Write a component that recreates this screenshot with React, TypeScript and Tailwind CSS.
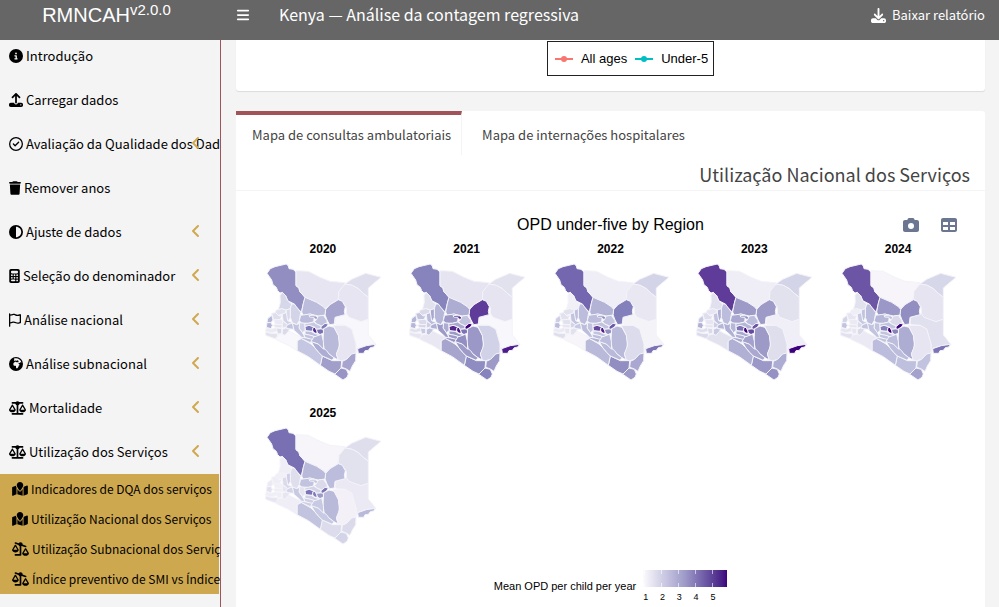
import type { IconType } from "react-icons";
import {
  FaAngleLeft,
  FaBars,
  FaCalculator,
  FaCamera,
  FaCircleHalfStroke,
  FaCircleInfo,
  FaDownload,
  FaEarthAfrica,
  FaMapLocation,
  FaRegCircleCheck,
  FaRegFlag,
  FaScaleBalanced,
  FaScaleUnbalancedFlip,
  FaTable,
  FaTrash,
  FaUpload,
} from "react-icons/fa6";

const MENU: { label: string; icon: IconType; size: string; expandable?: boolean }[] = [
  { label: "Introdução", icon: FaCircleInfo, size: "w-[14px]" },
  { label: "Carregar dados", icon: FaUpload, size: "w-[14px]" },
  { label: "Avaliação da Qualidade dos Dados", icon: FaRegCircleCheck, size: "w-[14px]", expandable: true },
  { label: "Remover anos", icon: FaTrash, size: "w-[12px]" },
  { label: "Ajuste de dados", icon: FaCircleHalfStroke, size: "w-[14px]", expandable: true },
  { label: "Seleção do denominador", icon: FaCalculator, size: "w-[11px]", expandable: true },
  { label: "Análise nacional", icon: FaRegFlag, size: "w-[12px]", expandable: true },
  { label: "Análise subnacional", icon: FaEarthAfrica, size: "w-[14px]", expandable: true },
  { label: "Mortalidade", icon: FaScaleBalanced, size: "w-[17px]", expandable: true },
  { label: "Utilização dos Serviços", icon: FaScaleBalanced, size: "w-[17px]", expandable: true },
];

const SUBMENU: { label: string; icon: IconType; size: string }[] = [
  { label: "Indicadores de DQA dos serviços", icon: FaMapLocation, size: "w-[16px]" },
  { label: "Utilização Nacional dos Serviços", icon: FaMapLocation, size: "w-[16px]" },
  { label: "Utilização Subnacional dos Serviços", icon: FaScaleUnbalancedFlip, size: "w-[17px]" },
  { label: "Índice preventivo de SMI vs Índice curativo", icon: FaScaleUnbalancedFlip, size: "w-[17px]" },
];

const YEARS = [2020, 2021, 2022, 2023, 2024, 2025];

// One shade per year (0 = lightest, 8 = darkest) for each county outline.
const COUNTIES: { name: string; points: string; shades: number[] }[] = [
  { name: "Turkana", shades: [4.4, 4.8, 5.5, 6.5, 5.9, 5.3], points: "36,58 46,44 60,38 94,30 100,36 102,44 114,46 123,54 123,95 132,102 134,112 150,130 145,148 139,174 122,158 118,150 98,140 92,125 82,115 75,117 68,110 64,100 54,92 50,78" },
  { name: "Marsabit", shades: [1.4, 1.5, 1, 1, 0.4, 0.4], points: "123,50 160,52 195,70 225,82 270,86 268,96 252,112 250,136 225,152 210,164 205,158 185,145 150,130 134,112 132,102 123,95" },
  { name: "Mandera", shades: [1.8, 1.6, 2.2, 2.2, 2.1, 1.8], points: "290,76 332,58 378,70 360,85 340,102 340,130 325,118 310,104 292,94 270,90" },
  { name: "Wajir", shades: [1.4, 1.5, 1.3, 1.6, 1.5, 1.6], points: "270,90 292,94 310,104 325,118 340,130 340,196 318,203 300,198 282,190 274,180 274,160 262,142 250,136 252,112" },
  { name: "Garissa", shades: [0.3, 0.3, 0.6, 0.9, 1.7, 1.2], points: "274,178 282,190 318,203 340,196 340,243 350,255 362,271 334,275 308,283 303,298 303,270 290,225 270,214 245,212 240,208 242,190 270,182" },
  { name: "Isiolo", shades: [3.7, 6.5, 4.9, 4, 4.4, 3], points: "250,137 262,142 271,158 268,172 270,182 240,190 238,210 224,212 216,198 210,182 212,166 225,152" },
  { name: "Samburu", shades: [3, 3.5, 3.3, 4, 4.1, 3.1], points: "150,130 185,145 205,158 212,166 210,182 205,184 190,186 165,180 145,184 140,174 145,148" },
  { name: "West Pokot", shades: [2.1, 1.6, 0.8, 1.7, 1.6, 1], points: "82,115 92,125 98,140 110,150 106,164 94,168 80,164 70,168 76,145 75,125" },
  { name: "Baringo", shades: [2.2, 3.2, 3, 3, 3, 1.8], points: "110,150 118,150 137,175 133,200 125,212 112,206 106,190 106,164" },
  { name: "Laikipia", shades: [3, 4, 3, 3.6, 3.2, 2.8], points: "137,184 165,180 178,184 176,204 160,208 140,208 133,200" },
  { name: "Isiolo South", shades: [4, 7, 4.6, 4.5, 3, 2.8], points: "162,184 182,186 190,192 184,198 176,190 164,189" },
  { name: "Meru", shades: [2.8, 2.8, 2.8, 3, 2, 2], points: "190,186 205,184 216,200 216,208 200,216 185,210 178,202 184,198" },
  { name: "Nyandarua", shades: [2.3, 3.5, 2.8, 3.2, 2.8, 1.5], points: "134,206 150,208 150,230 142,236 132,222" },
  { name: "Laikipia South", shades: [2.6, 3.6, 2.8, 3.2, 2.8, 2.2], points: "150,208 160,208 176,204 185,210 198,216 198,224 184,226 180,220 174,218 162,214 150,218" },
  { name: "Nyeri", shades: [5, 7, 6.2, 5.2, 4.9, 5.2], points: "150,218 162,214 174,218 178,228 168,232 152,230" },
  { name: "Kirinyaga", shades: [6.9, 7.4, 7.2, 8, 8, 5], points: "173,222 180,220 188,236 180,238 173,231" },
  { name: "Embu", shades: [5.3, 5.2, 4.4, 6.2, 4.8, 4], points: "184,226 204,224 206,236 196,242 188,238" },
  { name: "Tharaka", shades: [5, 8, 5.8, 5.9, 7.8, 5.2], points: "198,218 210,208 220,210 214,220 204,226 198,224" },
  { name: "Kitui", shades: [3.1, 4.1, 3.1, 4, 3.5, 3.1], points: "206,224 222,216 237,220 250,244 253,264 252,284 244,300 250,318 235,310 222,300 208,288 204,262" },
  { name: "Tana River", shades: [1.4, 2.3, 1.9, 1.8, 1.4, 0.7], points: "235,214 270,214 290,225 303,270 303,298 290,300 275,316 260,320 250,318 244,300 254,274 250,244" },
  { name: "Lamu", shades: [5.3, 7.3, 5.2, 8, 5.2, 3.1], points: "308,284 334,275 362,271 356,279 346,281 340,289 330,290 326,298 310,298" },
  { name: "Kilifi", shades: [3.7, 4, 3.6, 3.5, 2.8, 2], points: "303,297 302,320 292,336 285,352 272,344 260,340 262,322 275,316 290,300" },
  { name: "Kwale", shades: [4.2, 4.8, 4, 4.3, 3.8, 2.2], points: "238,360 258,342 274,346 280,360 276,370 264,378" },
  { name: "Taita Taveta", shades: [3.9, 4.5, 4.4, 4.1, 2.9, 1.9], points: "202,306 232,320 260,320 258,342 240,360 222,352 196,334" },
  { name: "Kajiado", shades: [2.7, 3.7, 3.1, 3.4, 3, 2.8], points: "126,258 140,254 168,270 180,282 192,296 202,306 196,334 160,308 126,290" },
  { name: "Narok", shades: [0.3, 1.3, 0.4, 1.6, 1.2, 1], points: "62,244 84,240 100,230 114,238 140,250 126,262 126,290 100,274 62,256" },
  { name: "Makueni", shades: [3.5, 4, 3.1, 3.6, 3, 2.6], points: "168,262 190,270 202,280 215,290 222,300 238,312 230,318 202,306 192,296 180,282" },
  { name: "Machakos", shades: [3.2, 4.4, 3, 3.8, 3, 2.6], points: "178,246 200,240 205,262 206,286 190,270 166,262" },
  { name: "Murang'a", shades: [3, 4, 2.8, 3.6, 2.8, 2.4], points: "150,231 168,232 180,239 196,242 180,248 150,240" },
  { name: "Kiambu", shades: [2.8, 4, 3, 3.4, 2.8, 2.4], points: "146,240 168,244 178,248 170,258 150,250" },
  { name: "Nairobi", shades: [3, 4.2, 3.4, 3.6, 2.8, 2.4], points: "140,250 154,252 172,256 166,266 140,254" },
  { name: "Nakuru", shades: [2.8, 4, 3, 3.4, 2.8, 2.6], points: "112,207 125,212 134,208 132,222 142,236 150,250 140,250 128,238 118,230 114,218" },
  { name: "Elgeyo Marakwet", shades: [2, 3.6, 2.9, 3.4, 2.8, 2.4], points: "94,168 106,164 106,190 100,202 94,190" },
  { name: "Trans Nzoia", shades: [1.6, 2, 1.6, 1.4, 1, 0.8], points: "64,168 80,164 94,168 90,178 70,184 60,176" },
  { name: "Uasin Gishu", shades: [2.2, 3, 2.8, 2.8, 2.6, 2], points: "82,180 94,176 98,200 112,206 98,212 84,200" },
  { name: "Bungoma", shades: [1.8, 2.8, 1.6, 1.8, 1.4, 1], points: "50,178 62,176 72,186 80,184 76,196 56,198" },
  { name: "Busia", shades: [3.2, 3.2, 2.4, 2.6, 2.2, 1.2], points: "38,194 50,184 54,198 48,206 36,206" },
  { name: "Kakamega", shades: [1.2, 2, 1.6, 1.4, 1.2, 0.8], points: "56,198 76,196 84,200 82,212 62,212" },
  { name: "Siaya", shades: [3.3, 3.2, 3, 3.4, 2.8, 1.6], points: "36,206 48,206 52,214 48,224 34,220" },
  { name: "Kisumu", shades: [1.5, 2.2, 1.4, 1.4, 1.4, 1], points: "54,214 62,212 82,212 80,222 62,220" },
  { name: "Nandi", shades: [1.8, 2.4, 2.2, 2.4, 2, 1.4], points: "82,212 84,202 98,212 92,220 82,222" },
  { name: "Kericho", shades: [2.8, 3.4, 2.6, 3.2, 2.8, 2.2], points: "98,212 112,207 116,226 100,224 92,220" },
  { name: "Bomet", shades: [2, 2.8, 1.6, 2.6, 2, 1.4], points: "92,222 104,226 100,232 90,244 82,240 82,226" },
  { name: "Homa Bay", shades: [1.2, 1.6, 1.2, 1.8, 1.4, 1], points: "34,222 50,226 64,220 68,232 48,236 32,232" },
  { name: "Kisii", shades: [2, 2.6, 1.4, 2, 1.4, 1], points: "64,222 80,224 80,238 68,240" },
  { name: "Migori", shades: [1.6, 1.4, 1.8, 2, 1.6, 1.4], points: "32,234 48,238 66,238 68,246 60,254 32,244" },
];

const PURPLES = [
  [252, 251, 253],
  [239, 237, 245],
  [218, 218, 235],
  [188, 189, 220],
  [158, 154, 200],
  [128, 125, 186],
  [106, 81, 163],
  [84, 39, 143],
  [63, 0, 125],
];

function shadeToColor(shade: number) {
  const low = Math.floor(shade);
  const high = Math.min(low + 1, PURPLES.length - 1);
  const t = shade - low;
  const [r, g, b] = PURPLES[low].map((c, i) => Math.round(c + (PURPLES[high][i] - c) * t));
  return `rgb(${r}, ${g}, ${b})`;
}

function CountyMap({ index }: { index: number }) {
  return (
    <svg viewBox="0 0 420 405" className="ml-1 h-[135px] w-[140px]" role="img" aria-label={`OPD ${YEARS[index]}`}>
      <g stroke="#f3f3f9" strokeWidth="3" strokeLinejoin="round">
        {COUNTIES.map(c => (
          <polygon key={c.name} points={c.points} fill={shadeToColor(c.shades[index])} />
        ))}
      </g>
    </svg>
  );
}

function Header() {
  return (
    <header className="flex h-10 shrink-0 bg-[#666666] text-white">
      <a href="#" className="w-[221px] shrink-0 pr-2 text-center font-['Liberation_Sans',sans-serif] text-[20px] leading-[30px]">
        RMNCAH<sup className="text-[15px]">v2.0.0</sup>
      </a>
      <div className="flex h-[30px] grow items-center pr-[14px]">
        <button type="button" aria-label="Menu" className="ml-[15px]">
          <FaBars className="size-[14px]" />
        </button>
        <h1 className="ml-[29px] pb-[2px] text-[16px]">Kenya — Análise da contagem regressiva</h1>
        <a href="#" className="ml-auto flex items-center gap-[6px] text-[13px]">
          <FaDownload className="size-[15px]" />
          Baixar relatório
        </a>
      </div>
    </header>
  );
}

function Sidebar() {
  return (
    <nav className="w-[221px] shrink-0 overflow-hidden border-r border-[#a0545a] text-[13px] text-black">
      <ul className="flex flex-col gap-3">
        {MENU.map(item => (
          <li key={item.label}>
            <a href="#" className="relative flex h-8 items-center gap-[3px] pl-[9px] whitespace-nowrap">
              <item.icon className={`h-[14px] shrink-0 ${item.size}`} />
              {item.label}
              {item.expandable && <FaAngleLeft className="absolute top-[7px] right-4 size-4 text-[#cfa850]" />}
            </a>
          </li>
        ))}
      </ul>
      <ul className="mt-[6px] mr-px bg-[#cea84f] text-[12px]">
        {SUBMENU.map(item => (
          <li key={item.label}>
            <a href="#" className="flex h-[30px] items-center gap-[3px] pl-3 whitespace-nowrap">
              <item.icon className={`h-[14px] shrink-0 ${item.size}`} />
              {item.label}
            </a>
          </li>
        ))}
      </ul>
    </nav>
  );
}

function LineKey({ color }: { color: string }) {
  return (
    <svg viewBox="0 0 18 6" className="h-[6px] w-[18px]" fill={color}>
      <rect y="2" width="18" height="2" />
      <circle cx="9" cy="3" r="3" />
    </svg>
  );
}

function ColorLegend() {
  return (
    <div className="flex items-start justify-center font-['Liberation_Sans',sans-serif] text-[11px] text-black">
      <span className="mt-[9px] mr-[7px] leading-[14px]">Mean OPD per child per year</span>
      <div className="w-[84px]">
        <div className="flex h-[17px] gap-4 bg-linear-to-r from-[#fcfbfd] via-[#9e9ac8] to-[#3f007d] pl-px">
          {[1, 2, 3, 4, 5].map(n => (
            <span key={n} className="w-px border-y-4 border-white/60" />
          ))}
        </div>
        <div className="mt-1 flex text-[9px] leading-[12px]">
          {[1, 2, 3, 4, 5].map(n => (
            <span key={n} className="w-[17px]">{n}</span>
          ))}
        </div>
      </div>
    </div>
  );
}

export default function App() {
  return (
    <div className="flex h-screen flex-col overflow-hidden bg-[#f4f4f4] font-['Noto_Sans_CJK_SC',sans-serif] text-[#444444]">
      <Header />
      <div className="flex min-h-0 grow">
        <Sidebar />
        <main className="flex min-w-0 grow flex-col gap-5 pr-[14px] pl-[15px]">
          <section className="flex justify-center rounded-b-[3px] bg-white pb-[15px] shadow-[0_1px_1px_rgba(0,0,0,0.1)]">
            <div className="mt-px ml-10 flex h-[35px] items-center border border-[#222222] pr-[5px] pl-[7px] font-['Liberation_Sans',sans-serif] text-[13px] text-black">
              <LineKey color="#f8766d" />
              <span className="mr-[8px] ml-[8px]">All ages</span>
              <LineKey color="#00bfc4" />
              <span className="ml-[8px]">Under-5</span>
            </div>
          </section>

          <section className="grow rounded-t-[3px] bg-white">
            <div role="tablist" className="flex h-11 text-[13px]">
              <button type="button" role="tab" aria-selected="true" className="border-t-4 border-r border-t-[#a0545a] border-r-[#f4f4f4] pr-[10px] pl-4">
                Mapa de consultas ambulatoriais
              </button>
              <button type="button" role="tab" aria-selected="false" className="border-t-4 border-transparent px-5">
                Mapa de internações hospitalares
              </button>
            </div>
            <h2 className="h-9 border-b border-[#f4f4f4] pr-[15px] text-right text-[18px] leading-[39px]">
              Utilização Nacional dos Serviços
            </h2>

            <div className="px-[15px] pt-[22px]">
              <div className="grid grid-cols-3 items-center">
                <h3 className="col-start-2 text-center font-['Liberation_Sans',sans-serif] text-[16px] whitespace-nowrap text-black">
                  OPD under-five by Region
                </h3>
                <div className="flex justify-end gap-[22px] pr-[13px] text-[#6b7790]">
                  <button type="button" aria-label="Download image">
                    <FaCamera className="size-4" />
                  </button>
                  <button type="button" aria-label="Download table">
                    <FaTable className="size-4" />
                  </button>
                </div>
              </div>
              <div className="mt-2 grid grid-cols-5 gap-y-5">
                {YEARS.map((year, i) => (
                  <figure key={year}>
                    <figcaption className="text-center font-['Liberation_Sans',sans-serif] text-[12px] leading-[9px] font-bold text-black">
                      {year}
                    </figcaption>
                    <CountyMap index={i} />
                  </figure>
                ))}
              </div>
              <div className="mt-[17px]">
                <ColorLegend />
              </div>
            </div>
          </section>
        </main>
      </div>
    </div>
  );
}
